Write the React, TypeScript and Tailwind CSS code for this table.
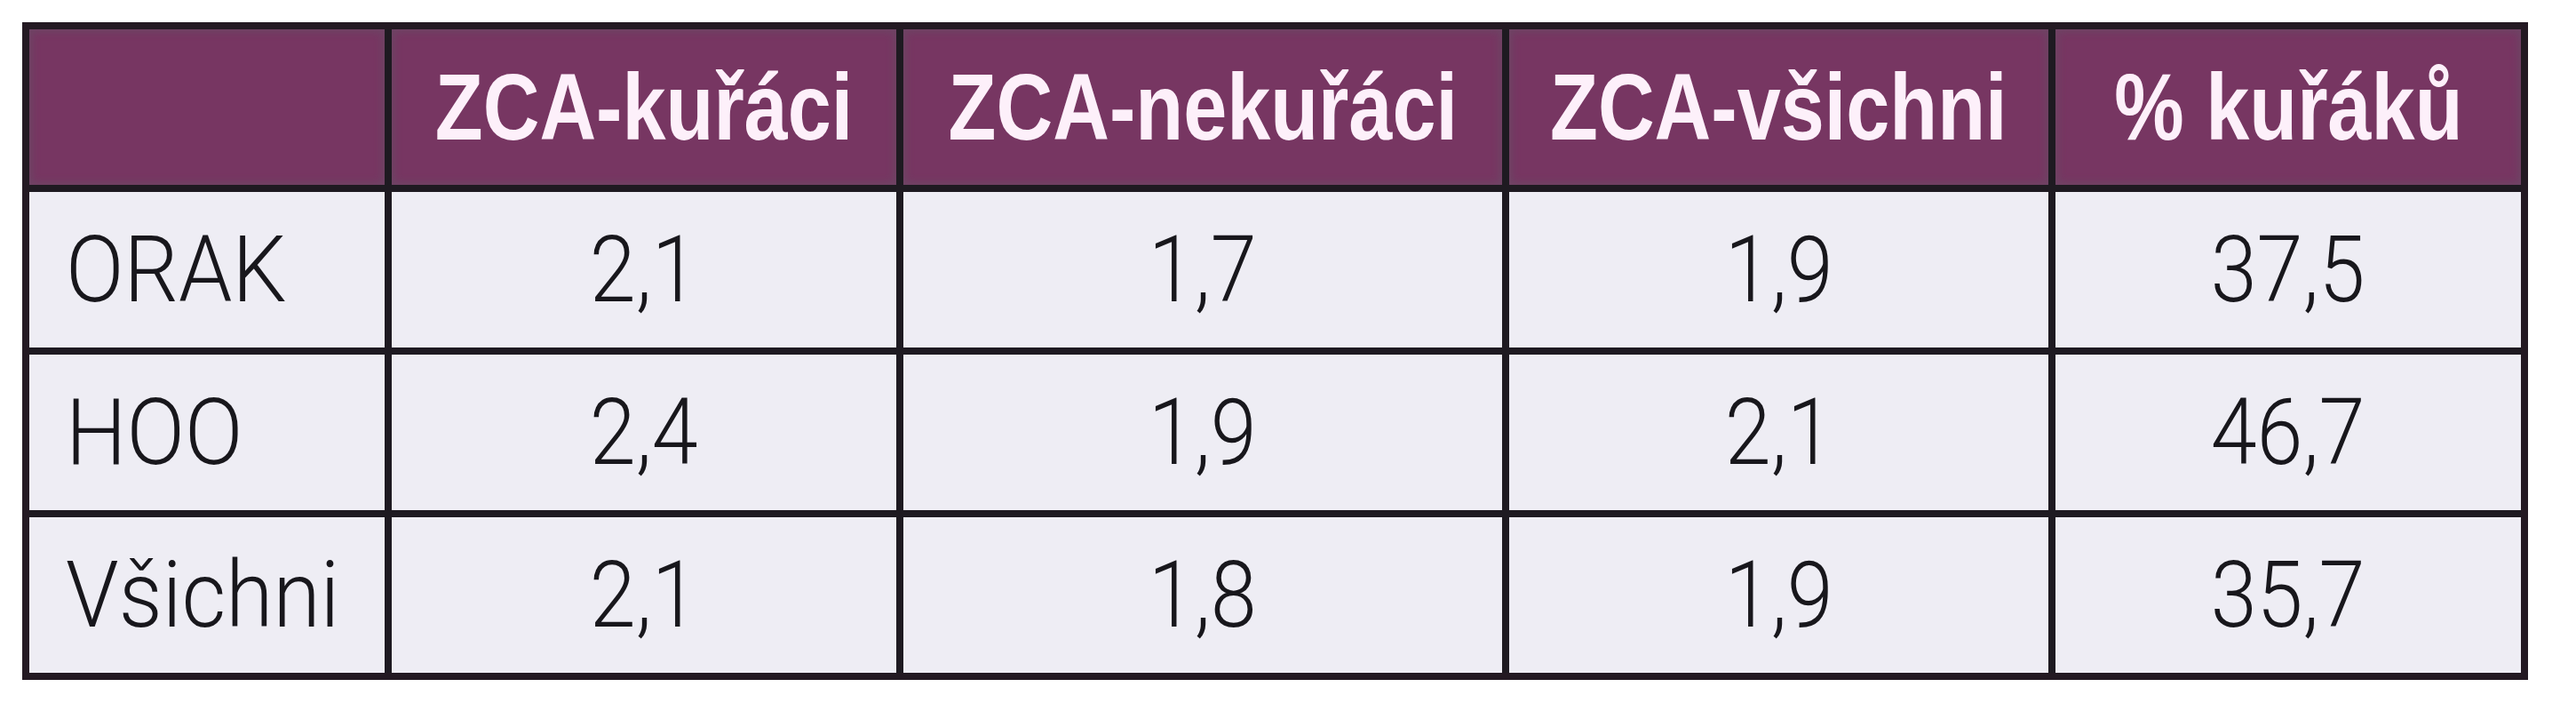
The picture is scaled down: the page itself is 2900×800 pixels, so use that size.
const headers = ["ZCA-kuřáci", "ZCA-nekuřáci", "ZCA-všichni", "% kuřáků"]

const rows = [
  { label: "ORAK", values: ["2,1", "1,7", "1,9", "37,5"] },
  { label: "HOO", values: ["2,4", "1,9", "2,1", "46,7"] },
  { label: "Všichni", values: ["2,1", "1,8", "1,9", "35,7"] },
]

export default function App() {
  return (
    <div className="min-h-screen bg-white pl-[25px] pt-[25px] font-['Liberation_Sans',Arial,sans-serif]">
      <div className="inline-grid grid-cols-[400px_568px_674px_607px_524px] grid-rows-[175px_175px_175px_175px] gap-[8px] border-[8px] border-[#231922] bg-[#1e1a21]">
        {/* header row */}
        <div className="bg-[#773662] shadow-[inset_0_0_8px_3px_#6d4564]" />
        {headers.map((h) => (
          <div
            key={h}
            className="flex items-center justify-center bg-[#773662] shadow-[inset_0_0_8px_3px_#6d4564]"
          >
            <span className="inline-block origin-center scale-x-[0.84] whitespace-nowrap text-[105px] font-bold leading-none text-[#fdf0fa]">
              {h}
            </span>
          </div>
        ))}

        {/* body rows */}
        {rows.map((row) => (
          <>
            <div key={row.label} className="flex items-center bg-[#eeedf4] pl-[41px]">
              <span className="inline-block origin-left scale-x-[0.93] whitespace-nowrap font-['Roboto','Liberation_Sans',sans-serif] text-[104px] font-light leading-none text-[#18171c]">
                {row.label}
              </span>
            </div>
            {row.values.map((v, i) => (
              <div key={row.label + i} className="flex items-center justify-center bg-[#eeedf4]">
                <span className="inline-block origin-center scale-x-[0.9] whitespace-nowrap font-['Roboto','Liberation_Sans',sans-serif] text-[104px] font-light leading-none text-[#18171c]">
                  {v}
                </span>
              </div>
            ))}
          </>
        ))}
      </div>
    </div>
  )
}
